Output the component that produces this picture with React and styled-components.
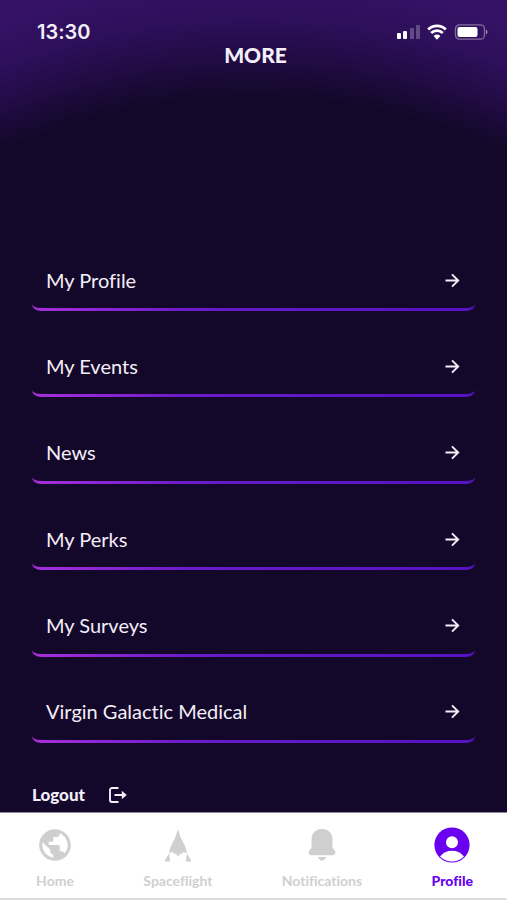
import React from "react";
import styled, { createGlobalStyle } from "styled-components";
import { MdPublic } from "react-icons/md";

const GlobalStyle = createGlobalStyle`
  :root {
    --clr-night: #130829;
    --clr-text: #f3eef9;
    --clr-muted: #cfcfcf;
    --clr-accent: #6a00f0;
  }

  * {
    box-sizing: border-box;
  }

  body {
    margin: 0;
    background: var(--clr-night);
    font-family: Lato, "Open Sans", sans-serif;
    font-variant-ligatures: none;
  }
`;

const Screen = styled.div`
  display: flex;
  flex-direction: column;
  min-height: 100vh;
  color: var(--clr-text);
  background: radial-gradient(
    circle at 50% 705px,
    var(--clr-night) 608px,
    #200b42 645px,
    #2d0f5a 685px,
    #351266 730px
  );
`;

const StatusBar = styled.div`
  display: flex;
  align-items: center;
  justify-content: space-between;
  height: 44px;
  padding: 20px 19px 0 37px;
`;

const Time = styled.span`
  font-family: Inter, sans-serif;
  font-size: 20px;
  font-weight: 600;
  line-height: 24px;
`;

const Indicators = styled.div`
  display: flex;
  align-items: center;
  gap: 7px;

  svg {
    display: block;
  }
`;

const Title = styled.h1`
  margin: 0;
  padding-left: 4px;
  font-size: 21px;
  font-weight: 900;
  line-height: 22px;
  text-align: center;
`;

const Main = styled.main`
  display: flex;
  flex: 1;
  flex-direction: column;
  padding: 185px 32px 5px;
`;

const Menu = styled.nav`
  display: flex;
  flex: 1;
  flex-direction: column;
  justify-content: space-between;
  gap: 16px;
`;

const MenuLink = styled.a`
  display: flex;
  align-items: center;
  justify-content: space-between;
  height: 60px;
  padding: 0 15px 0 14px;
  border-bottom: 3px solid transparent;
  border-radius: 0 0 9px 9px / 0 0 7px 7px;
  background:
    linear-gradient(var(--clr-night), var(--clr-night)) padding-box,
    linear-gradient(90deg, #a92fdc, #6a1cc8 35%, #5512c4) border-box;
  color: inherit;
  font-size: 20px;
  line-height: 24px;
  text-decoration: none;
`;

const Logout = styled.button`
  display: flex;
  align-items: center;
  align-self: flex-start;
  gap: 24px;
  margin-top: 40px;
  padding: 0;
  border: 0;
  background: none;
  color: inherit;
  font: inherit;
  font-size: 17px;
  font-weight: 900;
  line-height: 24px;
`;

const TabBar = styled.nav`
  display: flex;
  justify-content: space-between;
  height: 88px;
  padding: 13px 34px 0 36px;
  border-top: 1px solid #8c869a;
  border-bottom: 2px solid #dedede;
  background: #fff;
`;

const Tab = styled.a`
  display: flex;
  flex-direction: column;
  align-items: center;
  gap: 8px;
  color: ${({ $active }) => ($active ? "var(--clr-accent)" : "var(--clr-muted)")};
  font-size: 14px;
  font-weight: ${({ $active }) => ($active ? 900 : 700)};
  line-height: 18px;
  text-decoration: none;

  svg {
    display: block;
  }
`;

const SignalIcon = () => (
  <svg width="24" height="16" viewBox="0 0 24 16" fill="#fff" aria-hidden="true">
    <rect x="1" y="9" width="4" height="6" rx="1" />
    <rect x="7" y="7" width="4" height="8" rx="1" />
    <rect x="14" y="4" width="4" height="11" rx="1" opacity=".25" />
    <rect x="20" y="1" width="4" height="14" rx="1" opacity=".25" />
  </svg>
);

const WifiIcon = () => (
  <svg width="20" height="16" viewBox="0 0 20 16" fill="none" aria-hidden="true">
    <path
      d="M1.2 5.4a12.6 12.6 0 0 1 17.6 0M4.2 9a8.3 8.3 0 0 1 11.6 0"
      stroke="#fff"
      strokeWidth="2.8"
    />
    <path d="M6.6 12a4.8 4.8 0 0 1 6.8 0L10 15.7z" fill="#fff" />
  </svg>
);

const BatteryIcon = () => (
  <svg width="34" height="16" viewBox="0 0 34 16" aria-hidden="true">
    <rect
      x="1.5"
      y=".8"
      width="29"
      height="14.4"
      rx="4"
      fill="none"
      stroke="#fff"
      strokeOpacity=".4"
      strokeWidth="1.3"
    />
    <rect x="3.5" y="3" width="20" height="10" rx="2" fill="#fff" />
    <path d="M32 5.5a2.8 2.8 0 0 1 0 5z" fill="#fff" opacity=".5" />
  </svg>
);

const ArrowIcon = () => (
  <svg width="16" height="16" viewBox="0 0 16 16" fill="none" aria-hidden="true">
    <path d="M1.5 8.5H14M8 2.3l6.2 6.2L8 14.7" stroke="currentColor" strokeWidth="1.9" />
  </svg>
);

const LogoutIcon = () => (
  <svg width="18" height="16" viewBox="0 0 18 16" fill="none" aria-hidden="true">
    <path
      d="M9.5 1H3a2 2 0 0 0-2 2v10a2 2 0 0 0 2 2h6.5M5.5 8H16"
      stroke="currentColor"
      strokeWidth="1.9"
    />
    <path d="M12.8 3.8 17.8 8l-5 4.2z" fill="currentColor" />
  </svg>
);

const GlobeIcon = () => <MdPublic size={38} aria-hidden="true" />;

const ShipIcon = () => (
  <svg width="38" height="38" viewBox="0 0 38 38" fill="currentColor" aria-hidden="true">
    <path d="M19 3c1.2 3 1.8 7 3.6 10.500 2.500 4.500 5 8.500 5.300 14l-3.300-1.800-2.200 2.600-1.300-1L19 31l-2.100-3.700-1.300 1-2.200-2.600-3.300 1.800c.3-5.500 2.800-9.500 5.300-14C17.200 10 17.800 6 19 3z" />
    <path d="M9.900 27.500l1.300 8H5.500zM28.100 27.500l-1.300 8h5.700z" />
  </svg>
);

const BellIcon = () => (
  <svg width="38" height="38" viewBox="0 0 38 38" fill="currentColor" aria-hidden="true">
    <path d="M19 3c6.500 0 10.500 4.500 10.500 10.500v8.500l2 2.300a2.800 2.800 0 0 1-2 4.900h-21a2.800 2.800 0 0 1-2-4.900l2-2.300v-8.500C8.500 7.500 12.500 3 19 3z" />
    <path d="M15 31h8c-.6 2.300-2 3.500-4 3.500s-3.400-1.200-4-3.500z" />
  </svg>
);

const ProfileIcon = () => (
  <svg width="38" height="38" viewBox="0 0 38 38" aria-hidden="true">
    <circle cx="19" cy="19" r="17.6" fill="currentColor" />
    <circle cx="19" cy="16.3" r="6" fill="#fff" />
    <path
      d="M7 30.500C10 26.800 14 24.800 19 24.800s9 2 12 5.700C27.500 34 23.500 35.600 19 35.600S10.500 34 7 30.500z"
      fill="#fff"
    />
  </svg>
);

const links = [
  "My Profile",
  "My Events",
  "News",
  "My Perks",
  "My Surveys",
  "Virgin Galactic Medical",
];

const tabs = [
  { label: "Home", Icon: GlobeIcon },
  { label: "Spaceflight", Icon: ShipIcon },
  { label: "Notifications", Icon: BellIcon },
  { label: "Profile", Icon: ProfileIcon, active: true },
];

export default function App() {
  return (
    <>
      <GlobalStyle />
      <Screen>
        <StatusBar>
          <Time>13:30</Time>
          <Indicators>
            <SignalIcon />
            <WifiIcon />
            <BatteryIcon />
          </Indicators>
        </StatusBar>
        <Title>MORE</Title>
        <Main>
          <Menu>
            {links.map((label) => (
              <MenuLink key={label} href="#">
                {label}
                <ArrowIcon />
              </MenuLink>
            ))}
          </Menu>
          <Logout type="button">
            Logout
            <LogoutIcon />
          </Logout>
        </Main>
        <TabBar>
          {tabs.map(({ label, Icon, active }) => (
            <Tab key={label} href="#" $active={active}>
              <Icon />
              {label}
            </Tab>
          ))}
        </TabBar>
      </Screen>
    </>
  );
}
